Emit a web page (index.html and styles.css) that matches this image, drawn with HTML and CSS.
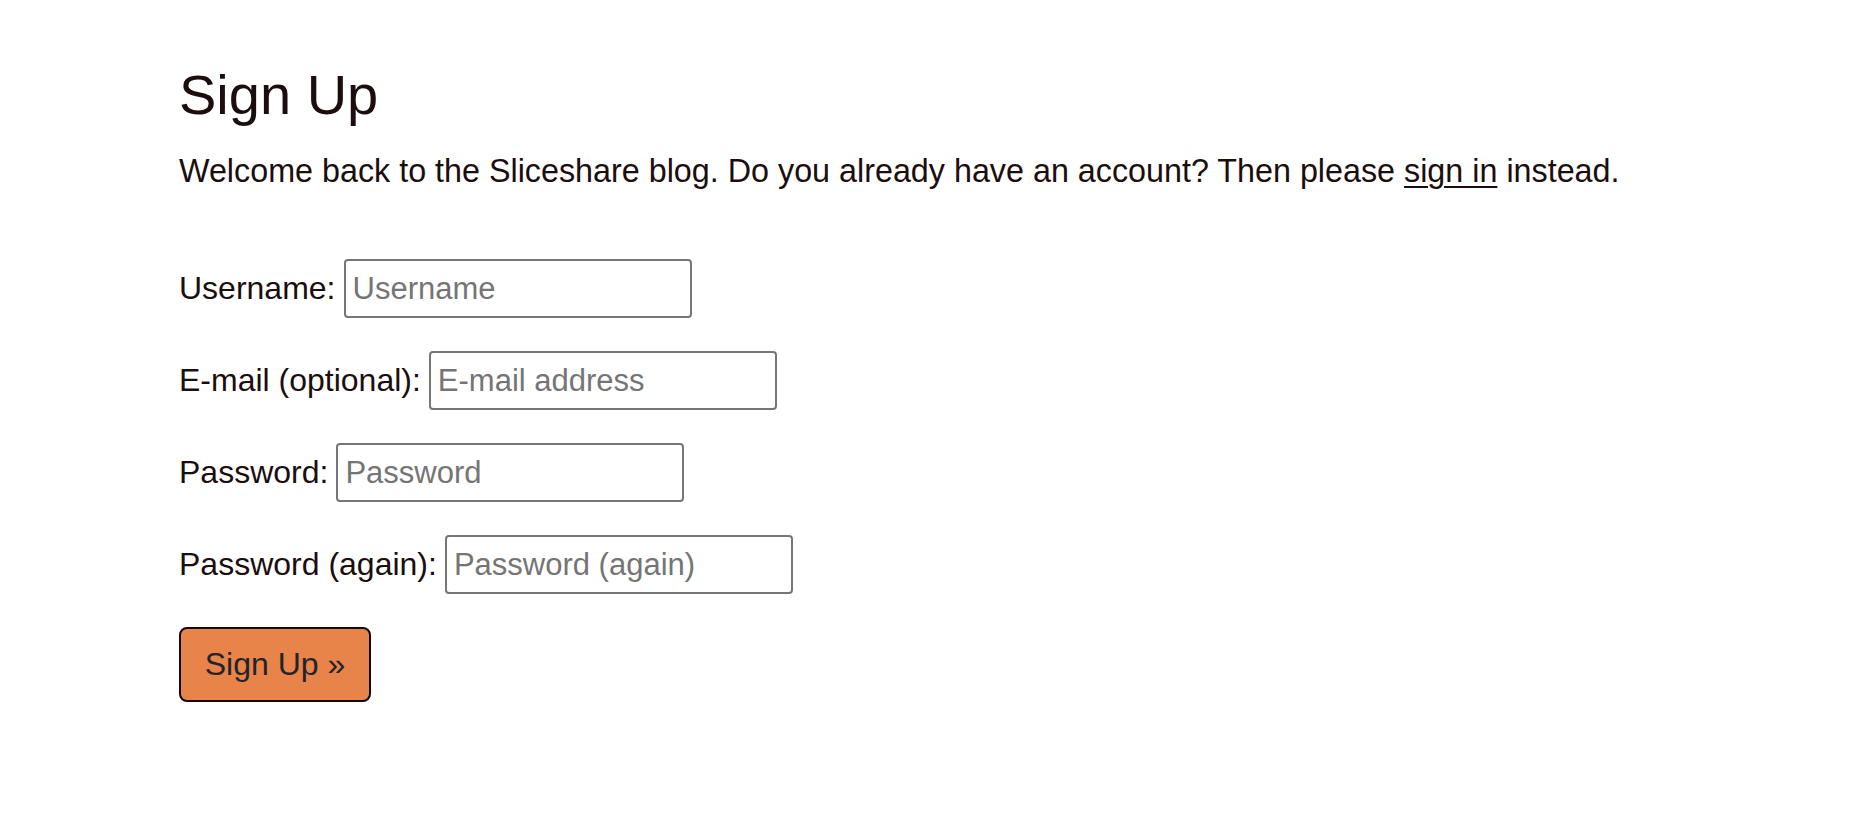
FILE: index.html
```html
<!DOCTYPE html>
<html lang="en">
<head>
<meta charset="utf-8">
<title>Sign Up</title>
<link rel="stylesheet" href="styles.css">
</head>
<body>
<main class="page">
  <h1 class="title">Sign Up</h1>
  <p class="intro">Welcome back to the Sliceshare blog. Do you already have an account? Then please <a href="#" class="link">sign in</a> instead.</p>
  <form class="form">
    <div class="row">
      <label class="label" for="u">Username:</label>
      <input class="field" id="u" type="text" placeholder="Username">
    </div>
    <div class="row">
      <label class="label" for="e">E-mail (optional):</label>
      <input class="field" id="e" type="email" placeholder="E-mail address">
    </div>
    <div class="row">
      <label class="label" for="p">Password:</label>
      <input class="field" id="p" type="password" placeholder="Password">
    </div>
    <div class="row">
      <label class="label" for="p2">Password (again):</label>
      <input class="field" id="p2" type="password" placeholder="Password (again)">
    </div>
    <div class="actions">
      <button class="btn" type="submit">Sign Up &raquo;</button>
    </div>
  </form>
</main>
</body>
</html>
```
FILE: styles.css
```css
html, body {
  margin: 0;
  padding: 0;
  background: #ffffff;
}
body {
  font-family: "Liberation Sans", Arial, Helvetica, sans-serif;
  color: #1b0e0e;
}
.page {
  padding: 63px 0 0 179px;
}
.title {
  margin: 0;
  font-size: 56px;
  line-height: 64px;
  font-weight: 400;
}
.intro {
  margin: 24px 0 0 0;
  font-size: 32.3px;
  line-height: 40px;
}
.link {
  color: inherit;
  text-decoration: underline;
  text-underline-offset: 4px;
  text-decoration-thickness: 2px;
}
.form {
  margin-top: 68px;
  display: flex;
  flex-direction: column;
  gap: 33px;
}
.row {
  display: flex;
  align-items: center;
  gap: 8px;
  height: 59px;
}
.label {
  font-size: 32px;
}
.field {
  box-sizing: border-box;
  width: 348px;
  height: 59px;
  border: 2px solid #767676;
  border-radius: 4px;
  padding: 0 7px;
  font-family: "Liberation Sans", Arial, Helvetica, sans-serif;
  font-size: 31px;
  color: #1b0e0e;
  background: #fff;
}
.field::placeholder {
  color: #757575;
}
.actions {
  display: flex;
}
.btn {
  box-sizing: border-box;
  height: 75px;
  width: 192px;
  padding: 0;
  border: 2px solid #120808;
  border-radius: 8px;
  background: #e8834a;
  color: #23232a;
  font-family: "Liberation Sans", Arial, Helvetica, sans-serif;
  font-size: 32px;
}
```
